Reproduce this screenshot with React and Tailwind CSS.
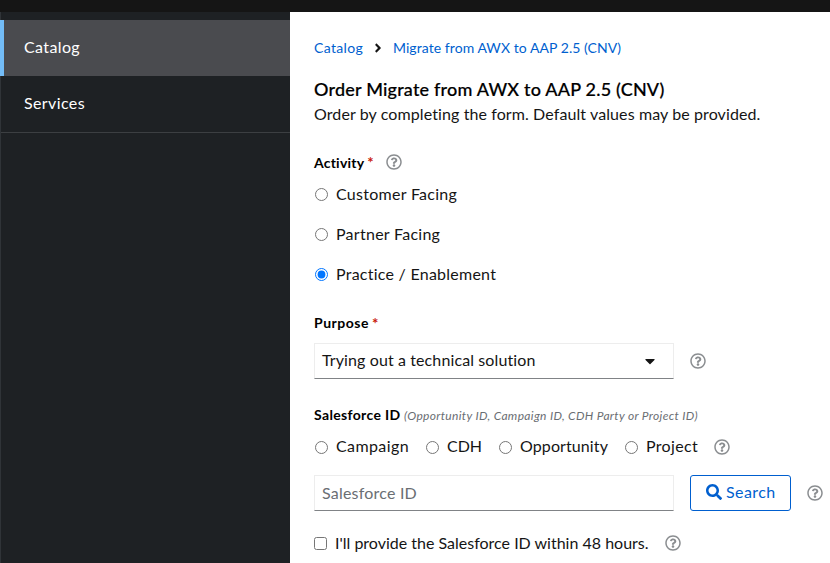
import { FaAngleRight, FaCaretDown, FaRegQuestionCircle, FaSearch } from "react-icons/fa";

function Help({ className = "" }) {
  return <FaRegQuestionCircle className={`size-4 shrink-0 text-[#8a8d90] ${className}`} />;
}

function Radio({ checked = false, label, className = "", textClass = "" }) {
  return (
    <label className={`flex h-6 items-center whitespace-nowrap ${className}`}>
      <input
        type="radio"
        defaultChecked={checked}
        className="ml-px mr-2 size-[13px] shrink-0 accent-[#0075ff]"
      />
      <span className={textClass}>{label}</span>
    </label>
  );
}

function Required() {
  return <span className="ml-[3px] text-[15px] font-bold tracking-normal text-[#c9190b]">*</span>;
}

export default function App() {
  return (
    <div className="flex h-[563px] w-[830px] flex-col overflow-hidden bg-white font-['Lato','Liberation_Sans',sans-serif] text-[16px] leading-6 text-[#151515]">
      <header className="h-3 shrink-0 bg-[#151515]" />
      <div className="flex min-h-0 flex-1">
        <nav className="w-[290px] shrink-0 border-l border-[#303438] bg-[#1e2124] pt-2 text-white">
          <a className="-ml-px flex h-14 items-center border-l-4 border-[#73bcf7] bg-[#4a4b4f] pb-0.5 pl-5 tracking-[0.38px]">
            Catalog
          </a>
          <a className="flex h-[57px] items-center border-b border-[#3c3f42] pb-0.5 pl-[23px] tracking-[0.39px]">
            Services
          </a>
        </nav>

        <main className="min-w-0 flex-1 whitespace-nowrap pl-6 pt-6">
          <div className="flex h-6 items-center text-[14px] text-[#005fcf]">
            <a className="w-[49px] tracking-[0.33px]">Catalog</a>
            <FaAngleRight className="ml-2 mr-2 size-[14px] text-[#151515]" />
            <a className="tracking-[0.06px]">Migrate from AWX to AAP 2.5 (CNV)</a>
          </div>

          <h1 className="mt-[17px] h-[25px] text-[18px] font-medium leading-6 tracking-[0.2px] text-black [-webkit-text-stroke:0.2px_black]">
            Order Migrate from AWX to AAP 2.5 (CNV)
          </h1>
          <p className="h-6 tracking-[0.1px]">
            Order by completing the form. Default values may be provided.
          </p>

          <div className="mt-6 flex h-6 items-center text-[14px] font-bold text-black">
            <span className="pt-0.5 tracking-[0.21px]">Activity</span>
            <Required />
            <Help className="ml-3" />
          </div>
          <div className="mt-2 flex flex-col gap-4">
            <Radio label="Customer Facing" textClass="tracking-[0.28px]" />
            <Radio label="Partner Facing" textClass="tracking-[0.27px]" />
            <Radio checked label="Practice / Enablement" textClass="tracking-[0.25px]" />
          </div>

          <div className="mt-[25px] flex h-6 items-center text-[14px] font-bold text-black">
            <span className="tracking-[0.5px]">Purpose</span>
            <Required />
          </div>
          <div className="mt-2 flex items-center">
            <div className="flex h-9 w-[360px] items-center justify-between border border-[#ededed] border-b-[#808386] pl-[7px] pr-[18px]">
              <span className="pb-0.5 tracking-[0.11px]">Trying out a technical solution</span>
              <FaCaretDown className="mb-px h-4 w-[10px]" />
            </div>
            <Help className="ml-4" />
          </div>

          <div className="mt-6 flex h-6 items-center">
            <span className="w-[90px] text-[14px] font-bold tracking-[0.35px] text-black">Salesforce ID</span>
            <span className="pt-px text-[12px] italic tracking-[0.34px] text-[#6a6e73]">
              (Opportunity ID, Campaign ID, CDH Party or Project ID)
            </span>
          </div>
          <div className="mt-2 flex items-center">
            <Radio label="Campaign" className="w-[111px]" textClass="pb-0.5 tracking-[0.4px]" />
            <Radio label="CDH" className="w-[73px]" textClass="pb-0.5" />
            <Radio label="Opportunity" className="w-[126px]" textClass="pb-0.5 tracking-[0.1px]" />
            <Radio label="Project" className="w-[90px]" textClass="pb-0.5 tracking-[0.33px]" />
            <Help />
          </div>

          <div className="mt-4 flex items-center">
            <input
              placeholder="Salesforce ID"
              className="h-9 w-[360px] shrink-0 border border-[#ededed] border-b-[#808386] pb-0.5 pl-[7px] tracking-[0.21px] placeholder:text-[#6a6e73]"
            />
            <button className="ml-4 flex h-9 w-[101px] shrink-0 items-center rounded-[3px] border border-[#005fcf] pb-0.5 pl-[15px] text-[#005fcf]">
              <FaSearch className="mr-1 size-4" />
              <span className="tracking-[0.4px]">Search</span>
            </button>
            <Help className="ml-4" />
          </div>

          <label className="mt-5 flex h-6 items-center">
            <input type="checkbox" className="mr-2 size-[13px] shrink-0" />
            <span className="w-[330px] pb-px">I'll provide the Salesforce ID within 48 hours.</span>
            <Help />
          </label>
        </main>
      </div>
    </div>
  );
}
